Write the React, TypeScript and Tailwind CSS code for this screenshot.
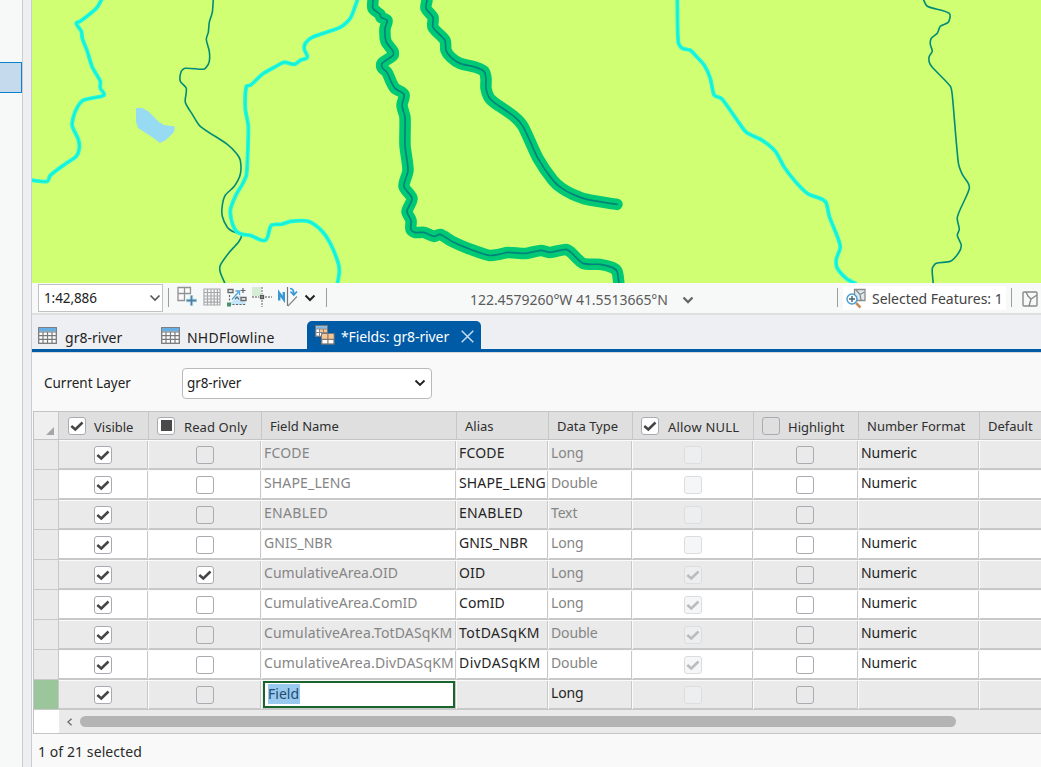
import React from "react";

const FONT = "font-['Noto_Sans','Open_Sans',sans-serif]";

const LEFT_RIVER = "M101 0L96 8L80 21L76 23L81 31L82 38L87 51L92 67L100 81L100 88L104 94L101 96L83 100L77 107L73 117L72 126L78 139L79 148L76 156L66 163L50 175L47 181L32 180";
const MID_RIVER = "M357 0L350 18L340 27L312 37L305 43L304 49L307 57L300 60L294 64L284 62L274 67L262 74L250 85L246 86L245 108L248 126L247 163L246 175L242 184L236 194L231 206L230 212L232 223L236 231L242 234L250 235L265 240L271 225L281 224L291 221L308 221L321 230L330 243L338 263L339 272L337 284";
const RIGHT_RIVER = "M677 0L678 42L682 48L690 50L696 56L704 65L710 78L714 95L721 98L730 110L737 120L746 132L762 140L775 151L784 167L794 180L807 193L822 199L826 203L829 216L837 236L840 247L836 259L837 268L847 279L855 283";

const WEST_STREAM = "M213 -1L212 12L209 22L208 32L206 39L209 51L209 61L206 67L203 69L185 68L181 71L180 81L186 88L185 102L192 114L200 126L227 144L236 153L240 160L240 174L234 186L225 195L222 205L222 216L227 227L232 231L241 235L238 242L229 252L220 265L220 272L225 284";
const EAST_STREAM = "M923 -1L927 6L949 13L948 22L940 26L937 33L931 38L930 44L932 51L929 56L929 62L932 67L950 86L952 95L958 162L962 174L968 183L969 188L966 196L957 217L959 229L957 235L961 245L958 253L950 261L936 263L932 268L933 284";

const MAIN_RIVER = "M373 0L373 8L380 14L381 17L387 20L385 28L386 41L393 51L393 55L382 63L382 67L387 72L391 81L395 88L404 94L402 105L405 117L405 145L408 170L404 186L412 198L407 211L411 220L411 229L415 232L424 232L434 236L440 234L452 241L468 248L489 255L499 254L508 252L526 253L541 250L550 252L566 249L571 252L583 263L600 264L612 267L617 271L619 284";
const BRANCH_RIVER = "M427 0L426 8L433 17L433 27L445 40L446 50L451 57L460 63L476 67L484 71L486 78L486 88L489 97L494 102L514 116L523 126L538 158L553 180L562 188L573 194L587 199L617 204";

// Rounds the bends of a polyline while still passing through every vertex.
function smooth(d: string): string {
  const pts = d.slice(1).split("L").map((p) => p.split(" ").map(Number));
  const at = (i: number) => pts[Math.max(0, Math.min(pts.length - 1, i))];
  let out = `M${pts[0][0]} ${pts[0][1]}`;
  for (let i = 0; i < pts.length - 1; i++) {
    const [a, b, c, e] = [at(i - 1), at(i), at(i + 1), at(i + 2)];
    const len = Math.hypot(c[0] - b[0], c[1] - b[1]);
    const dir = (p: number[], q: number[]) => {
      const l = Math.hypot(q[0] - p[0], q[1] - p[1]) || 1;
      return [((q[0] - p[0]) / l) * len * 0.25, ((q[1] - p[1]) / l) * len * 0.25];
    };
    const s = dir(a, c);
    const t = dir(b, e);
    out += `C${b[0] + s[0]} ${b[1] + s[1]} ${c[0] - t[0]} ${c[1] - t[1]} ${c[0]} ${c[1]}`;
  }
  return out;
}

function MapView() {
  return (
    <svg viewBox="32 0 1009 283" className="block h-[283px] w-full bg-[#d0ff73]" preserveAspectRatio="none" fill="none" strokeLinejoin="round" strokeLinecap="round">
      <path d="M136 108L142 108L148 111L159 122L164 125L175 126.500L174 132L166 140L160 143L152 137L138 128L136 122Z" fill="#97dbf2" />
      <g stroke="#008c78" strokeWidth="1.600" transform="translate(.3 .3)">
        <path d={smooth(WEST_STREAM)} />
        <path d={smooth(EAST_STREAM)} />
      </g>
      {[LEFT_RIVER, MID_RIVER, RIGHT_RIVER].map((d) => (
        <g key={d} transform="translate(.3 .3)">
          <path d={smooth(d)} stroke="#1bfae2" strokeWidth="3.900" />
          <path d={smooth(d)} stroke="#18e7c9" strokeWidth="1" />
        </g>
      ))}
      {[MAIN_RIVER, BRANCH_RIVER].map((d) => (
        <g key={d} transform="translate(0 .4)">
          <path d={smooth(d)} stroke="#00c975" strokeWidth="11.500" />
          <path d={smooth(d)} stroke="#00837a" strokeWidth="1.700" />
        </g>
      ))}
    </svg>
  );
}

function Chevron({ className, width = 2 }: { className: string; width?: number }) {
  return (
    <svg viewBox="0 0 12 8" className={"h-[8px] w-[12px] shrink-0 " + className} fill="none" stroke="currentColor" strokeWidth={width}>
      <path d="M1.500 1.500L6 6L10.500 1.500" />
    </svg>
  );
}

function TableIcon() {
  return (
    <svg viewBox="0 0 19 17" className="h-[17px] w-[19px] shrink-0">
      <rect x=".7" y=".7" width="17.600" height="15.600" fill="#fff" stroke="#77797b" strokeWidth="1.300" />
      <rect x="1" y="1" width="17" height="3.500" fill="#67aee4" />
      <path d="M1 5H18M1 8.700H18M1 12.400H18M5 5V16M9.500 5V16M14 5V16" stroke="#77797b" strokeWidth="1.200" />
    </svg>
  );
}

function FieldsIcon() {
  return (
    <svg viewBox="0 0 20 20" className="h-[20px] w-[20px] shrink-0">
      <rect x=".7" y=".7" width="11.600" height="10.600" fill="#fff" stroke="#777" strokeWidth="1.300" />
      <rect x="1.500" y="1.300" width="10" height="2.500" fill="#79b8e8" />
      <path d="M4.500 4H12V7H4.500Z" fill="#fbc68d" />
      <path d="M1 4H12M1 7.500H12M4.500 4V11M8.500 4V11" stroke="#888" />
      <rect x="6.700" y="8.700" width="12.300" height="10.300" fill="#fff" stroke="#82776d" strokeWidth="1.300" />
      <rect x="7.500" y="9.500" width="10.700" height="4.500" fill="#fbc68d" />
      <path d="M7 14.300H19M12.900 9V19" stroke="#82776d" strokeWidth="1.200" />
    </svg>
  );
}

function AddGridIcon() {
  return (
    <svg viewBox="0 0 20 20" className="h-[20px] w-[20px]" fill="none">
      <path d="M1 1.500H7.500V7.500H1ZM7.500 1.500H13.500V7.500H7.500ZM1 7.500H7.500V14.500H1Z" fill="#fafafa" stroke="#909294" strokeWidth="1.300" />
      <path d="M14.500 9V20M9 14.500H20" stroke="#d0edfb" strokeWidth="4" />
      <path d="M14.500 9.500V19.500M9.500 14.500H19.500" stroke="#4f7d9c" strokeWidth="1.800" />
    </svg>
  );
}

function GridIcon() {
  return (
    <svg viewBox="0 0 18 18" className="h-[18px] w-[18px]" fill="none" stroke="#a6a8a9" strokeWidth="1.200">
      <path d="M1 1H17V17H1ZM1 4.500H17M1 8H17M1 11H17M1 14.200H17M4.500 1V17M8 1V17M11.200 1V17M14.400 1V17" />
    </svg>
  );
}

function TransformIcon() {
  return (
    <svg viewBox="0 0 20 20" className="h-[20px] w-[20px]" fill="none">
      <path d="M4 18V15L13 8L18 14L19 18Z" fill="#c3e6fa" />
      <path d="M1 2.500H6V5.500H1ZM14 10.500H19V13.500H14Z" fill="#fff" stroke="#666" strokeWidth="1.300" />
      <path d="M2.500 8V14M5.500 17.500H18" stroke="#666" strokeDasharray="2 1.500" strokeWidth="1.200" />
      <path d="M5 12.500L11.500 5M8.500 4H12.500V8" stroke="#50a8df" strokeWidth="1.300" />
      <path d="M16 1V6M13.500 3.500H18.500M8 12L10 10L12 12.500" stroke="#5b6870" strokeWidth="1.200" />
      <rect x="0" y="15.500" width="4" height="4" fill="#4b9165" />
    </svg>
  );
}

function SnapIcon() {
  return (
    <svg viewBox="0 0 20 20" className="h-[20px] w-[20px]" fill="none">
      <rect width="9" height="9" fill="#d5edd5" />
      <path d="M0 10H7M13 10H20" stroke="#858789" strokeWidth="1.300" strokeDasharray="2 1" />
      <path d="M10 0V7M10 13V20" stroke="#858789" strokeWidth="1.300" strokeDasharray="2 1" />
      <rect x="8.500" y="8.500" width="3" height="3" fill="#999" stroke="#555" strokeWidth="1.300" />
    </svg>
  );
}

function NorthIcon() {
  return (
    <svg viewBox="0 0 22 20" className="h-[20px] w-[22px]" fill="none">
      <path d="M2.200 13.500V6L6.800 12.500V5" stroke="#3798d6" strokeWidth="2.400" />
      <path d="M10.500 0V19" stroke="#777" strokeWidth="1.200" />
      <path d="M11 19L20 9.500" stroke="#858585" strokeWidth="1.100" />
      <path d="M13 1.500C16 1.500 16.800 3.500 16.800 7M13.500 4.500L16.800 8L20 4.500" stroke="#3798d6" strokeWidth="1.700" />
    </svg>
  );
}

function ZoomSelectedIcon() {
  return (
    <svg viewBox="0 0 21 21" className="h-[21px] w-[21px] shrink-0" fill="none">
      <path d="M8.500 1.500H19V12.500H8.500Z" fill="#dfe9ee" stroke="#888a8c" strokeWidth="1.300" />
      <path d="M10 2L14 6.500L18.500 4M14 6.500L15 12" stroke="#858a8d" strokeWidth="1.300" />
      <path d="M10 15L14.500 19.500" stroke="#c58d57" strokeWidth="2.500" />
      <circle cx="6" cy="11" r="5" fill="#f5fbff" stroke="#4a9bd1" strokeWidth="1.400" />
      <path d="M6 8V14M3 11H9" stroke="#4c6272" strokeWidth="1.400" />
    </svg>
  );
}

function MapSheetIcon() {
  return (
    <svg viewBox="0 0 16 16" className="h-[16px] w-[16px] shrink-0" fill="none" stroke="#88898b" strokeWidth="1.400">
      <rect x="1" y="1" width="14" height="14" rx="1" />
      <path d="M4 1L6 5L9 8L15 4M9 8L7 15" />
    </svg>
  );
}

function Divider({ className }: { className: string }) {
  return <div className={"h-[19px] w-px shrink-0 bg-[#9b9d9f] " + className} />;
}

function MapToolbar() {
  return (
    <div className="flex h-[32px] w-full shrink-0 items-start border-b-2 border-[#dedfe1] bg-[#f7f9f9]">
      <div className="ml-[6px] mt-px flex h-[28px] w-[125px] items-center justify-between border border-[#bfc1c4] bg-white pl-[5px] pr-px">
        <span className="text-[13.5px] tracking-[-0.1px] text-[#222]">1:42,886</span>
        <Chevron className="text-[#555]" width={1.6} />
      </div>
      <Divider className="ml-[5px] mt-[5px]" />
      <div className="ml-[8px] mt-[3px] flex w-[145px] items-start">
        <AddGridIcon />
        <div className="ml-[6px] mt-[2px]"><GridIcon /></div>
        <div className="ml-[6px] mt-px"><TransformIcon /></div>
        <div className="ml-[5px] mt-px"><SnapIcon /></div>
        <div className="ml-[5px] mt-px"><NorthIcon /></div>
        <Chevron className="ml-[5px] mt-[8px] text-[#222]" />
      </div>
      <Divider className="ml-[4px] mt-[5px]" />
      <div className="ml-[143px] mt-[4px] flex h-[24px] w-[367px] items-center">
        <span className="whitespace-nowrap text-[14px] tracking-[-0.04px] text-[#5b5b5b]">122.4579260°W 41.5513665°N</span>
        <Chevron className="ml-[14px] mt-[2px] text-[#666]" width={2.3} />
      </div>
      <Divider className="mt-[5px]" />
      <div className="ml-[5px] mt-[3px] flex h-[24px] w-[163px] items-center bg-white pl-[3px]">
        <ZoomSelectedIcon />
        <span className="ml-[5px] whitespace-nowrap text-[14px] tracking-[-0.03px] text-[#444]">Selected Features: 1</span>
      </div>
      <Divider className="ml-[5px] mt-[5px]" />
      <div className="ml-[10px] mt-[8px]"><MapSheetIcon /></div>
    </div>
  );
}

function Tabs() {
  return (
    <div className="flex h-[37px] w-full shrink-0 items-end border-b-[3px] border-[#005ba7] bg-[#eeeff2] text-[14px] text-[#222]">
      <div className="flex h-[27px] w-[123px] items-center pl-[6px]">
        <TableIcon />
        <span className="ml-[8px] whitespace-nowrap pt-[3px] tracking-[0.02px]">gr8-river</span>
      </div>
      <div className="flex h-[27px] w-[152px] items-center pl-[6px]">
        <TableIcon />
        <span className="ml-[7px] whitespace-nowrap pt-[3px] tracking-[0.22px]">NHDFlowline</span>
      </div>
      <div className="flex h-[28px] w-[174px] items-center rounded-t-[5px] bg-[#005ba7] pl-[8px] text-white">
        <FieldsIcon />
        <span className="ml-[6px] w-[120px] whitespace-nowrap pt-[3px] tracking-[-0.1px]">*Fields: gr8-river</span>
        <svg viewBox="0 0 13 13" className="mt-[3px] h-[13px] w-[13px] shrink-0" stroke="#c4dcf2" strokeWidth="1.500">
          <path d="M.7 .7L12.300 12.300M12.300 .7L.7 12.300" />
        </svg>
      </div>
    </div>
  );
}

type CheckState = "on" | "off" | "mixed" | "dim" | "dimOn" | "offGray";

function Check({ state }: { state: CheckState }) {
  const dim = state === "dim" || state === "dimOn";
  const clear = state === "offGray";
  const tone = dim ? "border-[#dcdde0] bg-[#eff0f2]/60" : clear ? "border-[#a9abb1]" : "border-[#a9abb1] bg-white";
  return (
    <div className={"flex h-[18px] w-[18px] shrink-0 items-center justify-center rounded-[3px] border " + tone}>
      {(state === "on" || state === "dimOn") && (
        <svg viewBox="0 0 14 12" className="h-[12px] w-[14px]" fill="none" stroke={dim ? "#bbbcbe" : "#454545"} strokeWidth="2.500">
          <path d="M1.300 6L5.300 9.500L12.500 2.500" />
        </svg>
      )}
      {state === "mixed" && <div className="h-[11px] w-[11px] bg-[#4a4a4a]" />}
    </div>
  );
}

const GRID = "grid grid-cols-[25px_90px_113px_195px_92px_84px_121px_105px_121px_1fr]";

function HeaderCell({ label, state, className = "" }: { label: string; state?: CheckState; className?: string }) {
  return (
    <div className={"flex items-center overflow-hidden whitespace-nowrap border-r border-[#c6c7c9] text-[13px] text-[#2e2e2e] last:border-r-0 " + className}>
      {state && <Check state={state} />}
      <span className={state ? "pt-[5px]" : "pt-[3px]"}>{label}</span>
    </div>
  );
}

type FieldRow = {
  name: string;
  alias: string;
  type: string;
  readOnly?: boolean;
  nullable?: boolean;
  format?: string;
  editing?: boolean;
  nameTracking?: string;
  aliasTracking?: string;
};

const ROWS: FieldRow[] = [
  { name: "FCODE", alias: "FCODE", type: "Long", format: "Numeric", nameTracking: "tracking-[0.2px]", aliasTracking: "tracking-[0.2px]" },
  { name: "SHAPE_LENG", alias: "SHAPE_LENG", type: "Double", format: "Numeric", nameTracking: "tracking-[0.15px]", aliasTracking: "tracking-[0.15px]" },
  { name: "ENABLED", alias: "ENABLED", type: "Text", nameTracking: "tracking-[0.3px]", aliasTracking: "tracking-[0.3px]" },
  { name: "GNIS_NBR", alias: "GNIS_NBR", type: "Long", format: "Numeric" },
  { name: "CumulativeArea.OID", alias: "OID", type: "Long", readOnly: true, nullable: true, format: "Numeric" },
  { name: "CumulativeArea.ComID", alias: "ComID", type: "Long", nullable: true, format: "Numeric" },
  { name: "CumulativeArea.TotDASqKM", alias: "TotDASqKM", type: "Double", nullable: true, format: "Numeric", nameTracking: "tracking-[0.17px]", aliasTracking: "tracking-[0.45px]" },
  { name: "CumulativeArea.DivDASqKM", alias: "DivDASqKM", type: "Double", nullable: true, format: "Numeric", nameTracking: "tracking-[0.17px]", aliasTracking: "tracking-[0.45px]" },
  { name: "Field", alias: "", type: "Long", editing: true },
];

function Cell({ children, className = "", last = false }: { children?: React.ReactNode; className?: string; last?: boolean }) {
  return (
    <div className={"border-t border-[#fbfbfb] " + (last ? "" : "border-r")}>
      <div className={"flex h-[28px] overflow-hidden whitespace-nowrap border-b border-[#c8c8c8] " + (last ? "" : "border-r ") + className}>{children}</div>
    </div>
  );
}

function Row({ row, gray }: { row: FieldRow; gray: boolean }) {
  const text = "pl-[2px] pt-[2px] text-[14px] leading-[20px] ";
  const nameTracking = row.nameTracking ?? "tracking-[0.03px]";
  const aliasTracking = row.aliasTracking ?? "tracking-[0.1px]";
  return (
    <div className={GRID + " h-[30px] border-b border-[#c8c8c8] " + (gray ? "bg-[#eaeaea]" : "bg-white")}>
      <div className={"border-r border-[#c6c7c9] " + (row.editing ? "bg-[#9bc59a]" : "bg-[#eaeaea]")} />
      <Cell className="pl-[35px] pt-[5px]"><Check state="on" /></Cell>
      <Cell className="pl-[47px] pt-[5px]"><Check state={row.readOnly ? "on" : gray ? "offGray" : "off"} /></Cell>
      {row.editing ? (
        <Cell className="pl-px">
          <div className="h-[27px] w-[192px] border-2 border-[#1b632c] bg-white pl-[3px] pt-px">
            <span className="block h-[20px] w-[32px] bg-[#99c9ef] text-[14px] leading-[20px] text-[#234c70]">{row.name}</span>
          </div>
        </Cell>
      ) : (
        <Cell className={text + nameTracking + " text-[#858585]"}>{row.name}</Cell>
      )}
      <Cell className={text + aliasTracking + " text-[#242424]"}>{row.alias}</Cell>
      <Cell className={text + "tracking-[-0.15px] " + (row.editing ? "text-[#242424]" : "text-[#858585]")}>{row.type}</Cell>
      <Cell className="pl-[51px] pt-[5px]"><Check state={row.nullable ? "dimOn" : "dim"} /></Cell>
      <Cell className="pl-[42px] pt-[5px]"><Check state={gray ? "offGray" : "off"} /></Cell>
      <Cell className={text + "tracking-[-0.05px] text-[#242424]"}>{row.format}</Cell>
      <Cell last />
    </div>
  );
}

function FieldsTable() {
  return (
    <div className="ml-px w-[1008px] shrink-0 overflow-hidden border-b border-l border-t border-[#c3c4c7]">
      <div className={GRID + " h-[28px] border-b border-[#c3c4c7] bg-[#dfdfdf]"}>
        <div className="flex items-end justify-end border-r border-[#c6c7c9] bg-[#efefef] pb-[4px] pr-[4px]">
          <svg viewBox="0 0 8 8" className="h-[8px] w-[8px]"><path d="M8 0V8H0Z" fill="#a5a6a8" /></svg>
        </div>
        <HeaderCell label="Visible" state="on" className="gap-[8px] pl-[9px]" />
        <HeaderCell label="Read Only" state="mixed" className="gap-[9px] pl-[8px] tracking-[0.1px]" />
        <HeaderCell label="Field Name" className="pl-[8px]" />
        <HeaderCell label="Alias" className="pl-[8px]" />
        <HeaderCell label="Data Type" className="pl-[8px]" />
        <HeaderCell label="Allow NULL" state="on" className="gap-[9px] pl-[8px] tracking-[0.2px]" />
        <HeaderCell label="Highlight" state="offGray" className="gap-[8px] pl-[8px]" />
        <HeaderCell label="Number Format" className="pl-[8px]" />
        <HeaderCell label="Default" className="pl-[8px]" />
      </div>
      {ROWS.map((row, i) => (
        <Row key={row.name} row={row} gray={i % 2 === 0} />
      ))}
      <div className="flex h-[23px] bg-[#eaeaea]">
        <div className="w-[25px] shrink-0 bg-white" />
        <svg viewBox="0 0 6 9" className="ml-[8px] mt-[8px] h-[8px] w-[5px] shrink-0" fill="none" stroke="#666" strokeWidth="1.500">
          <path d="M5.500 .5L1 4.500L5.500 8.500" />
        </svg>
        <div className="ml-[8px] mt-[6px] h-[11px] w-[876px] rounded-full bg-[#b4b4b4]" />
      </div>
    </div>
  );
}

export default function App() {
  return (
    <div className={"flex h-[767px] w-[1041px] overflow-hidden " + FONT}>
      <div className="h-full w-[22px] shrink-0 bg-[#f7f9f8] pt-[62px]">
        <div className="h-[31px] w-full border-y border-r border-[#0b82cb] bg-[#c6daee]" />
      </div>
      <div className="h-full w-[10px] shrink-0 border-l border-r border-[#cccdd1] bg-[#eeeff1]" />
      <main className="flex min-w-0 flex-1 flex-col bg-[#f9f9f9]">
        <MapView />
        <MapToolbar />
        <Tabs />
        <div className="flex h-[59px] shrink-0 items-center border-t border-[#d6d8db] pl-[12px] pt-[2px]">
          <span className="w-[138px] pt-px text-[13.5px] text-[#222]">Current Layer</span>
          <div className="flex h-[31px] w-[250px] items-center justify-between rounded-[4px] border border-[#b9babd] bg-white pl-[4px] pr-[5px]">
            <span className="text-[13.5px] tracking-[-0.1px] text-[#222]">gr8-river</span>
            <Chevron className="text-[#222]" width={1.900} />
          </div>
        </div>
        <FieldsTable />
        <div className="flex flex-1 items-center pl-[6px] pt-[2px] text-[14px] tracking-[0.08px] text-[#2a2a2a]">1 of 21 selected</div>
      </main>
    </div>
  );
}
